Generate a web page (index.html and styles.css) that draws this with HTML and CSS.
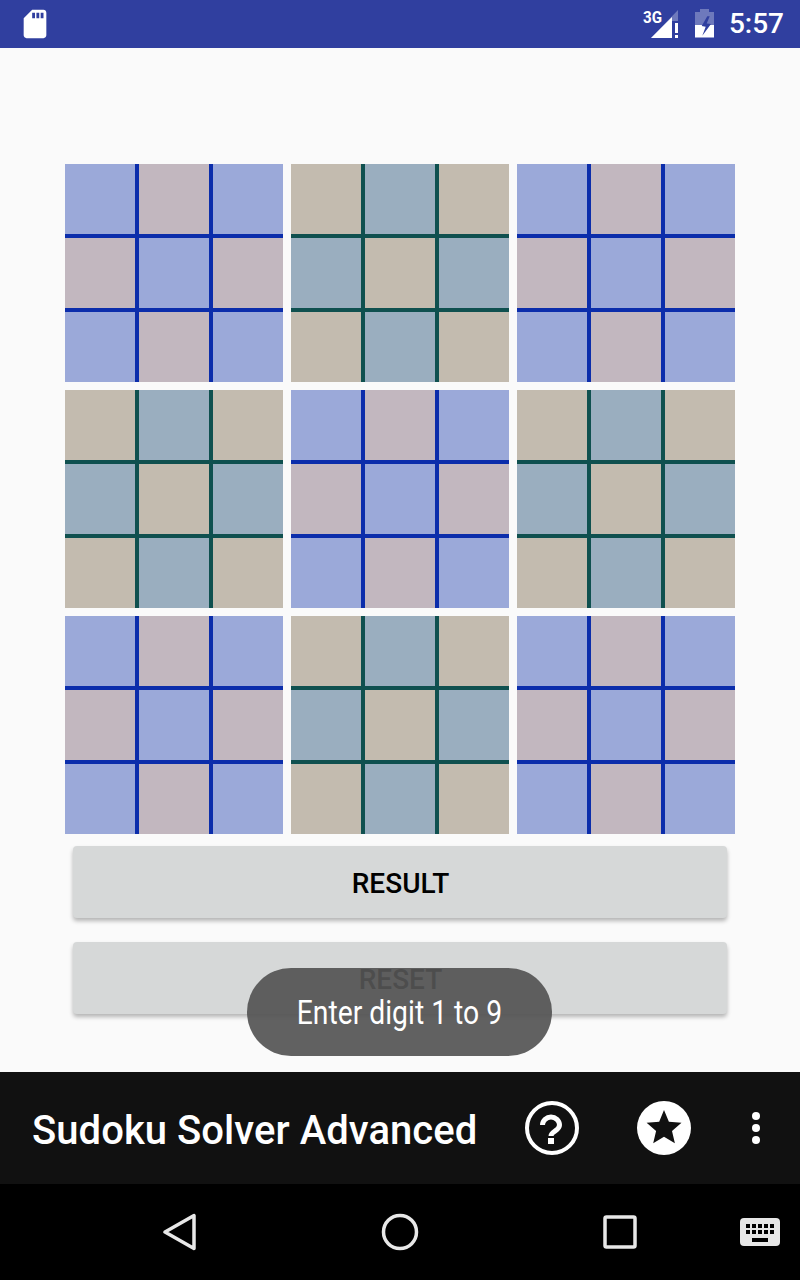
FILE: index.html
```html
<!DOCTYPE html>
<html>
<head>
    <title>Sudoku Solver Advanced</title>
    <link rel="stylesheet" href="styles.css">
</head>
<body>
    <div class="status-bar">
        <svg class="sd-icon" viewBox="0 0 24 24"><path fill="#fff" d="M18 2h-8L4.02 8 4 20c0 1.1.9 2 2 2h12c1.1 0 2-.9 2-2V4c0-1.1-.9-2-2-2zm-6 6h-2V4h2v4zm3 0h-2V4h2v4zm3 0h-2V4h2v4z"/></svg>
        <div class="status-right">
            <svg class="signal-icon" width="40" height="30" viewBox="0 0 40 30">
                <text x="0" y="13" class="signal-text" textLength="19" lengthAdjust="spacingAndGlyphs">3G</text>
                <path fill="#fff" fill-opacity=".3" d="M8 28 35 0v11h-6v17z"/>
                <path fill="#fff" d="M8 28 29 7v21z"/>
                <path fill="#fff" d="M32 13h3v10h-3zM32 25h3v3h-3z"/>
            </svg>
            <svg class="battery-icon" width="20" height="30" viewBox="0 0 20 30">
                <path fill="#fff" fill-opacity=".3" d="M6 0h9v3h5v13H1V3h5z"/>
                <path fill="#fff" d="M1 16h19v12.500H1z"/>
                <path fill="#303f9f" d="M13.300 7.200h2.400L12.700 14.500 17 15 8.300 26.800l3.400-9L7.700 17z"/>
            </svg>
            <span class="clock">5:57</span>
        </div>
    </div>

    <div class="content">
        <div class="board">
            <div class="block block-blue">
                <div class="cell-a"></div><div class="cell-b"></div><div class="cell-a"></div>
                <div class="cell-b"></div><div class="cell-a"></div><div class="cell-b"></div>
                <div class="cell-a"></div><div class="cell-b"></div><div class="cell-a"></div>
            </div>
            <div class="block block-green">
                <div class="cell-a"></div><div class="cell-b"></div><div class="cell-a"></div>
                <div class="cell-b"></div><div class="cell-a"></div><div class="cell-b"></div>
                <div class="cell-a"></div><div class="cell-b"></div><div class="cell-a"></div>
            </div>
            <div class="block block-blue">
                <div class="cell-a"></div><div class="cell-b"></div><div class="cell-a"></div>
                <div class="cell-b"></div><div class="cell-a"></div><div class="cell-b"></div>
                <div class="cell-a"></div><div class="cell-b"></div><div class="cell-a"></div>
            </div>
            <div class="block block-green">
                <div class="cell-a"></div><div class="cell-b"></div><div class="cell-a"></div>
                <div class="cell-b"></div><div class="cell-a"></div><div class="cell-b"></div>
                <div class="cell-a"></div><div class="cell-b"></div><div class="cell-a"></div>
            </div>
            <div class="block block-blue">
                <div class="cell-a"></div><div class="cell-b"></div><div class="cell-a"></div>
                <div class="cell-b"></div><div class="cell-a"></div><div class="cell-b"></div>
                <div class="cell-a"></div><div class="cell-b"></div><div class="cell-a"></div>
            </div>
            <div class="block block-green">
                <div class="cell-a"></div><div class="cell-b"></div><div class="cell-a"></div>
                <div class="cell-b"></div><div class="cell-a"></div><div class="cell-b"></div>
                <div class="cell-a"></div><div class="cell-b"></div><div class="cell-a"></div>
            </div>
            <div class="block block-blue">
                <div class="cell-a"></div><div class="cell-b"></div><div class="cell-a"></div>
                <div class="cell-b"></div><div class="cell-a"></div><div class="cell-b"></div>
                <div class="cell-a"></div><div class="cell-b"></div><div class="cell-a"></div>
            </div>
            <div class="block block-green">
                <div class="cell-a"></div><div class="cell-b"></div><div class="cell-a"></div>
                <div class="cell-b"></div><div class="cell-a"></div><div class="cell-b"></div>
                <div class="cell-a"></div><div class="cell-b"></div><div class="cell-a"></div>
            </div>
            <div class="block block-blue">
                <div class="cell-a"></div><div class="cell-b"></div><div class="cell-a"></div>
                <div class="cell-b"></div><div class="cell-a"></div><div class="cell-b"></div>
                <div class="cell-a"></div><div class="cell-b"></div><div class="cell-a"></div>
            </div>
        </div>
        <div class="actions">
            <button class="action-btn">RESULT</button>
            <button class="action-btn">RESET</button>
        </div>
    </div>

    <div class="app-bar">
        <span class="app-title">Sudoku Solver Advanced</span>
        <div class="app-icons">
            <svg class="help-icon" width="56" height="56" viewBox="0 0 56 56">
                <circle cx="28" cy="28" r="25" fill="none" stroke="#fff" stroke-width="4"/>
                <path fill="none" stroke="#fff" stroke-width="5" d="M18.500 25c0-4.500 4-8 8.500-8s8.500 3.500 8.500 8c0 6-8.500 6-8.500 11"/>
                <rect x="24" y="38" width="6" height="6" fill="#fff"/>
            </svg>
            <svg class="star-icon" width="54" height="54" viewBox="0 0 54 54">
                <circle cx="27" cy="27" r="27" fill="#fff"/>
                <path fill="#111" d="M27 9l4.900 11.700 12.600 1-9.500 8.200 2.900 12.300L27 35.700l-10.800 6.500 2.900-12.300-9.500-8.200 12.600-1z"/>
            </svg>
            <svg class="more-icon" width="10" height="34" viewBox="0 0 10 34">
                <circle cx="5" cy="5" r="4" fill="#fff"/>
                <circle cx="5" cy="17" r="4" fill="#fff"/>
                <circle cx="5" cy="29" r="4" fill="#fff"/>
            </svg>
        </div>
    </div>

    <div class="nav-bar">
        <svg class="nav-back" width="34" height="38" viewBox="0 0 34 38">
            <path fill="none" stroke="#e8e8e8" stroke-width="3.500" stroke-linejoin="round" d="M31 2.500v33L2 19z"/>
        </svg>
        <svg class="nav-home" width="38" height="38" viewBox="0 0 38 38">
            <circle cx="19" cy="19" r="16.500" fill="none" stroke="#e8e8e8" stroke-width="3.500"/>
        </svg>
        <svg class="nav-recent" width="34" height="34" viewBox="0 0 34 34">
            <rect x="2" y="2" width="30" height="30" rx="1.500" fill="none" stroke="#e8e8e8" stroke-width="3.500"/>
        </svg>
        <svg class="nav-keyboard" width="40" height="28" viewBox="0 0 40 28">
            <rect width="40" height="28" rx="4" fill="#e6e6e6"/>
            <path fill="#000" d="M6 6h4v4H6zM12 6h4v4h-4zM18 6h4v4h-4zM24 6h4v4h-4zM30 6h4v4h-4zM6 12h4v4H6zM12 12h4v4h-4zM18 12h4v4h-4zM24 12h4v4h-4zM30 12h4v4h-4zM12 20h16v4H12z"/>
        </svg>
    </div>

    <div class="toast"><span class="toast-text">Enter digit 1 to 9</span></div>
</body>
</html>
```

FILE: styles.css
```css
html, body {
    margin: 0;
    padding: 0;
}
body {
    position: relative;
    width: 800px;
    height: 1280px;
    overflow: hidden;
    display: flex;
    flex-direction: column;
    background-color: #fafafa;
    font-family: Roboto, sans-serif;
}

/* status bar */
.status-bar {
    height: 48px;
    flex: none;
    display: flex;
    align-items: center;
    justify-content: space-between;
    padding: 0 16px 0 18px;
    background-color: #303f9f;
    color: #fff;
}
.sd-icon {
    width: 34px;
    height: 34px;
    display: block;
}
.status-right {
    display: flex;
    align-items: center;
}
.signal-icon {
    display: block;
    margin-top: 1px;
    overflow: visible;
}
.signal-text {
    font-family: Roboto, sans-serif;
    font-size: 17px;
    font-weight: 700;
    fill: #fff;
}
.battery-icon {
    display: block;
    margin-left: 11px;
}
.clock {
    margin-left: 15px;
    font-size: 28px;
    font-weight: 500;
    line-height: 48px;
}

/* board */
.content {
    flex: 1;
    display: flex;
    flex-direction: column;
    align-items: center;
    padding-top: 116px;
}
.board {
    display: grid;
    grid-template-columns: repeat(3, 218px);
    grid-auto-rows: 218px;
    gap: 8px;
}
.block {
    display: grid;
    grid-template-columns: repeat(3, 70px);
    grid-auto-rows: 70px;
    gap: 4px;
}
.block-blue {
    background-color: #0b2dab;
}
.block-blue .cell-a {
    background-color: #9ba9d9;
}
.block-blue .cell-b {
    background-color: #c2b7bf;
}
.block-green {
    background-color: #0f504f;
}
.block-green .cell-a {
    background-color: #c3bbaf;
}
.block-green .cell-b {
    background-color: #9aaebf;
}

/* buttons */
.actions {
    display: flex;
    flex-direction: column;
    gap: 24px;
    margin-top: 12px;
}
.action-btn {
    width: 654px;
    height: 72px;
    padding: 2px 0 0 1px;
    border: none;
    border-radius: 4px;
    background-color: #d6d8d8;
    box-shadow: 0 3px 4px rgba(0, 0, 0, 0.28);
    color: #000;
    font-family: Roboto, sans-serif;
    font-size: 28px;
    font-weight: 500;
}

/* action bar */
.app-bar {
    height: 112px;
    flex: none;
    display: flex;
    align-items: center;
    justify-content: space-between;
    padding: 0 39px 0 32px;
    background-color: #111;
}
.app-title {
    margin-top: 4px;
    color: #fff;
    font-size: 40px;
    font-weight: 500;
    letter-spacing: 0.05px;
}
.app-icons {
    display: flex;
    align-items: center;
}
.star-icon {
    display: block;
    margin-left: 57px;
}
.help-icon {
    display: block;
}
.more-icon {
    display: block;
    margin-left: 60px;
}

/* nav bar */
.nav-bar {
    height: 96px;
    flex: none;
    display: flex;
    align-items: center;
    padding-left: 163px;
    background-color: #000;
}
.nav-home {
    margin-left: 184px;
}
.nav-recent {
    margin-left: 184px;
}
.nav-keyboard {
    margin-left: 103px;
}

/* toast */
.toast {
    position: absolute;
    left: 247px;
    top: 968px;
    width: 305px;
    height: 88px;
    display: flex;
    align-items: center;
    justify-content: center;
    border-radius: 44px;
    background-color: rgba(84, 84, 84, 0.92);
}
.toast-text {
    display: block;
    color: #fff;
    font-size: 34px;
    white-space: nowrap;
    transform: scaleX(0.832);
}
```
